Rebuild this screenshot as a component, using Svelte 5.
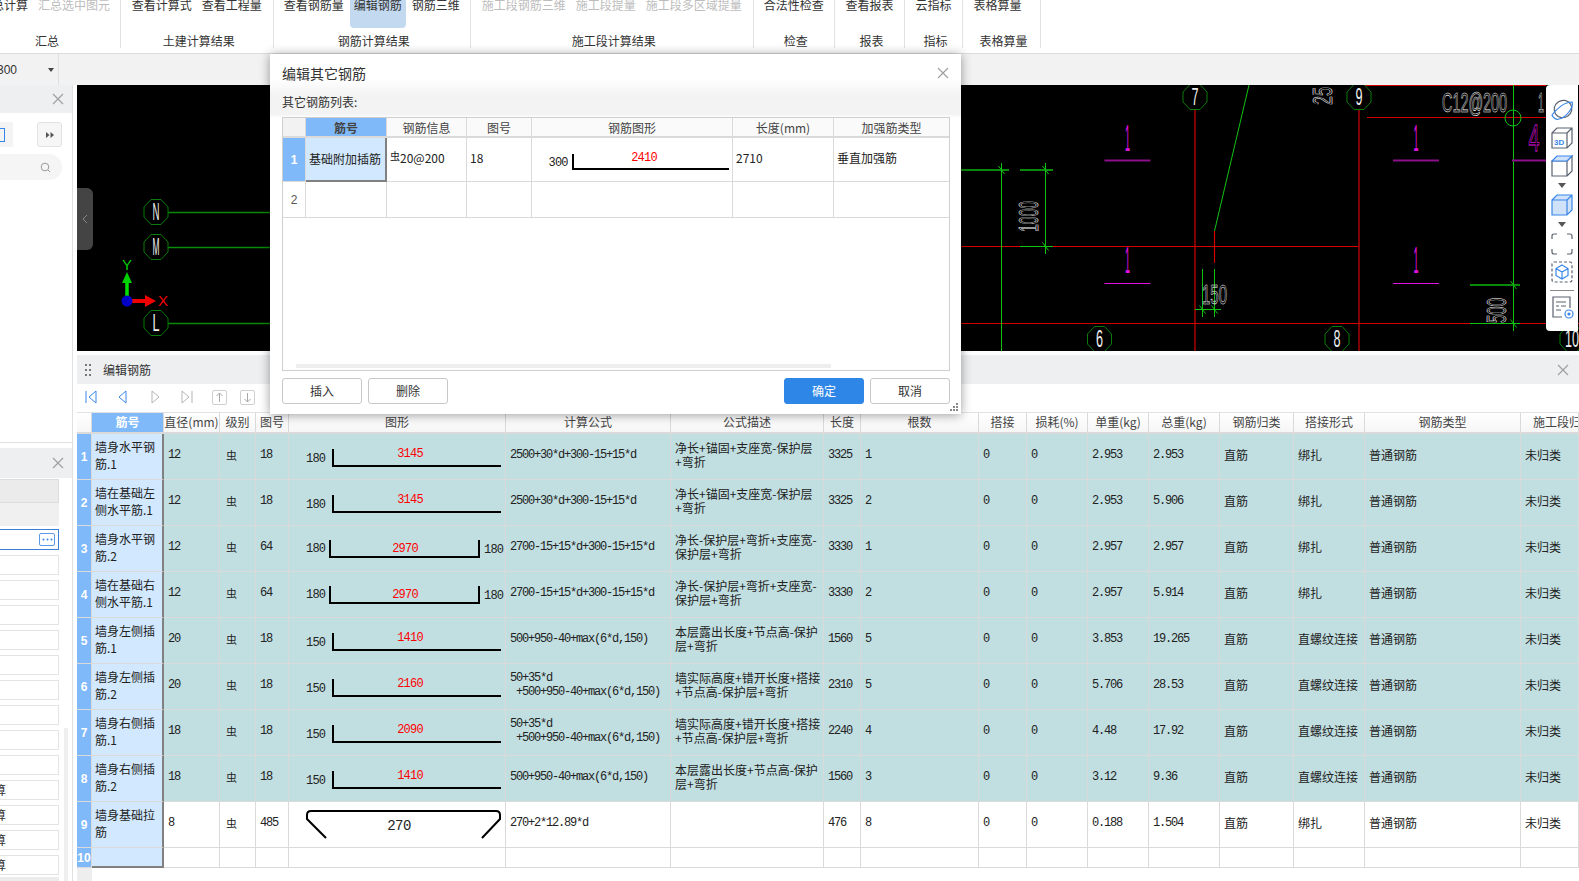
<script>
  const groups = [
    { w: 121, pad: 30, label: "汇总", items: [["汇总计算"], ["汇总选中图元", "off"]] },
    { w: 152.5, label: "土建计算结果", items: [["查看计算式"], ["查看工程量"]] },
    { w: 197.5, label: "钢筋计算结果", items: [["查看钢筋量"], ["编辑钢筋", "on"], ["钢筋三维"]] },
    { w: 282.5, label: "施工段计算结果", items: [["施工段钢筋三维", "off"], ["施工段提量", "off"], ["施工段多区域提量", "off"]] },
    { w: 81.5, label: "检查", items: [["合法性检查"]] },
    { w: 70, label: "报表", items: [["查看报表"]] },
    { w: 58, label: "指标", items: [["云指标"]] },
    { w: 78, pad: 0, label: "表格算量", items: [["表格算量", "shift"]] },
  ];

  const widths = [15, 72, 56, 36, 33, 217, 165, 153, 37, 118, 48, 61, 61, 71, 74, 71, 156, 58];
  const heads = ["", "筋号", "直径(mm)", "级别", "图号", "图形", "计算公式", "公式描述", "长度", "根数", "搭接", "损耗(%)", "单重(kg)", "总重(kg)", "钢筋归类", "搭接形式", "钢筋类型", "施工段归类"];

  const f1 = ["2500+30*d+300-15+15*d"];
  const f2 = ["2700-15+15*d+300-15+15*d"];
  const f3 = ["500+950-40+max(6*d,150)"];
  const f4 = ["50+35*d", " +500+950-40+max(6*d,150)"];
  const d1 = ["净长+锚固+支座宽-保护层", "+弯折"];
  const d2 = ["净长-保护层+弯折+支座宽-", "保护层+弯折"];
  const d3 = ["本层露出长度+节点高-保护", "层+弯折"];
  const d4 = ["墙实际高度+错开长度+搭接", "+节点高-保护层+弯折"];

  const rows = [
    { name: "墙身水平钢筋.1", dia: 12, fig: 18, left: 180, mid: 3145, f: f1, d: d1, len: 3325, n: 1, unit: "2.953", total: "2.953", form: "绑扎" },
    { name: "墙在基础左侧水平筋.1", dia: 12, fig: 18, left: 180, mid: 3145, f: f1, d: d1, len: 3325, n: 2, unit: "2.953", total: "5.906", form: "绑扎" },
    { name: "墙身水平钢筋.2", dia: 12, fig: 64, left: 180, mid: 2970, f: f2, d: d2, len: 3330, n: 1, unit: "2.957", total: "2.957", form: "绑扎" },
    { name: "墙在基础右侧水平筋.1", dia: 12, fig: 64, left: 180, mid: 2970, f: f2, d: d2, len: 3330, n: 2, unit: "2.957", total: "5.914", form: "绑扎" },
    { name: "墙身左侧插筋.1", dia: 20, fig: 18, left: 150, mid: 1410, f: f3, d: d3, len: 1560, n: 5, unit: "3.853", total: "19.265", form: "直螺纹连接" },
    { name: "墙身左侧插筋.2", dia: 20, fig: 18, left: 150, mid: 2160, f: f4, d: d4, len: 2310, n: 5, unit: "5.706", total: "28.53", form: "直螺纹连接" },
    { name: "墙身右侧插筋.1", dia: 18, fig: 18, left: 150, mid: 2090, f: f4, d: d4, len: 2240, n: 4, unit: "4.48", total: "17.92", form: "直螺纹连接" },
    { name: "墙身右侧插筋.2", dia: 18, fig: 18, left: 150, mid: 1410, f: f3, d: d3, len: 1560, n: 3, unit: "3.12", total: "9.36", form: "直螺纹连接" },
    { name: "墙身基础拉筋", dia: 8, fig: 485, mid: 270, f: ["270+2*12.89*d"], d: [], len: 476, n: 8, unit: "0.188", total: "1.504", form: "绑扎", plain: true },
  ];

  const dlgWidths = [23, 81, 80, 65, 201, 101, 115];
  const dlgHeads = ["", "筋号", "钢筋信息", "图号", "钢筋图形", "长度(mm)", "加强筋类型"];

  const bubbles = [
    ["N", 156, 212], ["M", 156, 247], ["L", 156, 323],
    ["7", 1195, 97], ["9", 1359, 97], ["6", 1099.5, 339], ["8", 1337, 339], ["10", 1572, 339],
  ];
  const reds = [
    [1359, 85.5, 1546, 85.5], [1367, 117.5, 1546, 117.5], [961, 246.5, 1359, 246.5], [961, 323.5, 1579, 323.5],
    [1195, 109, 1195, 351], [1359, 109, 1359, 351], [1214.5, 231, 1214.5, 263], [1575, 330, 1575, 351],
  ];
  const greens = [
    [1249, 85, 1214.5, 231], [1001.5, 163, 1001.5, 351], [1045.5, 163, 1045.5, 254], [1513.5, 85, 1513.5, 331],
    [1202.5, 269, 1202.5, 317], [1214.5, 269, 1214.5, 317], [1195, 309.5, 1221, 309.5],
    [1470, 323.5, 1520, 323.5], [1020, 246.5, 1053, 246.5],
  ];
  const thick = [[961, 170, 1009, 170], [1020, 170, 1053, 170], [1470, 285, 1520, 285]];
  const ticks = [[1001.5, 170], [1045.5, 170], [1045.5, 246.5], [1202.5, 309.5], [1214.5, 309.5], [1513.5, 285], [1513.5, 323.5]];
  const marks = [
    ["1", 1127.5, 151, 160.5, 2, "#8c0f8c"], ["1", 1416, 151, 160.5, 2, "#8c0f8c"],
    ["1", 1127.5, 273, 283.5, 1, "#e010e0"], ["1", 1416, 273, 283.5, 1, "#e010e0"],
  ];
  const boxes = ["", "", "", "", "", "", "", "", "", "算", "算", "算", "算"];

  function octagon(x, y) {
    const a = 5, b = 12;
    return [[-a, -b - 0.5], [a, -b - 0.5], [b, -a], [b, a], [a, b + 0.5], [-a, b + 0.5], [-b, a], [-b, -a]]
      .map(([p, q]) => `${x + p},${y + q}`).join(" ");
  }
</script>

{#snippet shape(r)}
  <svg class="bar" width="216" height="45" viewBox="0 0 216 45">
    {#if r.fig === 18}
      <path d="M44 15V32H212" />
      <text class="dim" x="17" y="28">{r.left}</text>
      <text class="dim red" x="121" y="23" text-anchor="middle">{r.mid}</text>
    {:else if r.fig === 64}
      <path d="M41 14V31H190V14" />
      <text class="dim" x="17" y="26">{r.left}</text>
      <text class="dim" x="195" y="27">{r.left}</text>
      <text class="dim red" x="116" y="26" text-anchor="middle">{r.mid}</text>
    {:else}
      <path d="M37 36L18 17V13Q18 9 22 9H207Q211 9 211 13V17L193 36" />
      <text class="dim big" x="110" y="28" text-anchor="middle">{r.mid}</text>
    {/if}
  </svg>
{/snippet}

{#snippet x(cls = "")}
  <svg class="close {cls}" width="12" height="12" viewBox="0 0 12 12"><path d="M1 1L11 11M11 1L1 11" /></svg>
{/snippet}

<div class="app">
  <header class="ribbon">
    {#each groups as g}
      <div class="group" style:width="{g.w}px" style:padding-right="{g.pad ?? 0}px">
        <div class="items">
          {#each g.items as [text, state]}
            <span class="item {state ?? ''}">{text}</span>
          {/each}
        </div>
        <div class="group-label">{g.label}</div>
      </div>
    {/each}
  </header>

  <div class="subbar">
    <div class="combo"><span>300</span><i></i></div>
  </div>

  <div class="body">
    <aside class="side">
      <section class="side-top">
        <div class="side-head">{@render x()}</div>
        <div class="side-tools">
          <span class="chip"><b></b></span>
          <button class="expand" aria-label="展开"><svg width="10" height="8" viewBox="0 0 10 8"><path d="M1 1L4.5 4L1 7ZM5.5 1L9 4L5.5 7Z" /></svg></button>
        </div>
        <div class="search">
          <svg width="11" height="11" viewBox="0 0 11 11"><circle cx="5" cy="5" r="3.8" /><path d="M8 8L10 10" /></svg>
        </div>
      </section>

      <section class="side-bottom">
        <div class="side-head short">{@render x()}</div>
        <div class="side-wrap">
          <div class="side-list">
            <div class="prop head"></div>
            <div class="prop fill"></div>
            <div class="prop active">
              <span class="more"><svg width="11" height="3" viewBox="0 0 11 3"><circle cx="1.5" cy="1.5" r="1" /><circle cx="5.5" cy="1.5" r="1" /><circle cx="9.5" cy="1.5" r="1" /></svg></span>
            </div>
            {#each boxes as b}
              <div class="prop box"><span>{b}</span></div>
            {/each}
            <div class="prop last"></div>
          </div>
          <div class="side-scroll"></div>
        </div>
      </section>
    </aside>

    <main class="main">
      <div class="canvas">
        <svg class="cad" width="1502" height="266" viewBox="77 85 1502 266">
          <rect x="77" y="85" width="1502" height="266" fill="#000" />
          {#each [212, 247, 323] as y}
            <line x1="168" x2="272" y1={y + 0.5} y2={y + 0.5} stroke="#0a8a0a" stroke-width="1.4" />
          {/each}
          {#each reds as [a, b, c, d]}
            <line x1={a} y1={b} x2={c} y2={d} stroke="#d40000" stroke-width="1.2" />
          {/each}
          {#each greens as [a, b, c, d]}
            <line x1={a} y1={b} x2={c} y2={d} stroke="#12c212" stroke-width="1" />
          {/each}
          {#each thick as [a, b, c, d]}
            <line x1={a} y1={b} x2={c} y2={d} stroke="#0a8a0a" stroke-width="2" />
          {/each}
          {#each ticks as [a, b]}
            <path d="M{a - 3} {b - 4}L{a + 3} {b + 4}" stroke="#12c212" fill="none" />
          {/each}
          <circle cx="1513" cy="118" r="8" fill="none" stroke="#12c212" />

          {#each bubbles as [t, bx, by]}
            <polygon points={octagon(bx, by)} fill="#000" stroke="#0a7a0a" />
            <text class="cad-t" x={bx} y={by + 8} text-anchor="middle" textLength={t.length * 7} lengthAdjust="spacingAndGlyphs">{t}</text>
          {/each}

          {#each marks as [t, mx, base, barY, sw, col]}
            <text x={mx} y={base} text-anchor="middle" class="mag" textLength="5" lengthAdjust="spacingAndGlyphs">{t}</text>
            <line x1={mx - 23} x2={mx + 23} y1={barY} y2={barY} stroke={col} stroke-width={sw} />
          {/each}
          <text x="1534" y="151" text-anchor="middle" class="mag thin" textLength="11" lengthAdjust="spacingAndGlyphs">4</text>
          <line x1="1512" x2="1546" y1="160.5" y2="160.5" stroke="#8c0f8c" stroke-width="2" />

          <text class="out" x="1442" y="112" textLength="65" lengthAdjust="spacingAndGlyphs">C12@200</text>
          <text class="out" x="1538" y="112" textLength="6" lengthAdjust="spacingAndGlyphs">1</text>
          <text class="out" x="1202" y="304" textLength="25" lengthAdjust="spacingAndGlyphs">150</text>
          <text class="out" transform="translate(1038 232) rotate(-90)" textLength="31" lengthAdjust="spacingAndGlyphs">1000</text>
          <text class="out" transform="translate(1506 323) rotate(-90)" textLength="25" lengthAdjust="spacingAndGlyphs">500</text>
          <text class="out" transform="translate(1332 105) rotate(-90)" textLength="18" lengthAdjust="spacingAndGlyphs">25</text>

          <path d="M127 301V280" stroke="#00e000" stroke-width="3.5" />
          <path d="M122 283L127 272L132 283Z" fill="#00d000" />
          <path d="M127 301H147" stroke="#f00000" stroke-width="4" />
          <path d="M145 295L156 301L145 307Z" fill="#f00000" />
          <circle cx="127" cy="301" r="5.5" fill="#0000c8" />
          <text x="127" y="270" text-anchor="middle" class="axis green">Y</text>
          <text x="163" y="306" text-anchor="middle" class="axis redx">X</text>
        </svg>

        <div class="handle"><svg width="6" height="10" viewBox="0 0 6 10"><path d="M5 1L1 5L5 9" /></svg></div>

        <nav class="palette">
          <svg width="24" height="24" viewBox="0 0 24 24"><ellipse cx="13" cy="11" rx="9" ry="8.5" transform="rotate(-35 13 11)" class="g" /><path class="b" d="M2 17C7 10 15 4 22 4C24 9 16 20 9 21C6 22 3 20 2 17Z" /></svg>
          <svg width="24" height="24" viewBox="0 0 24 24"><path class="g" d="M2 7L7 2H22V17L17 22H2ZM2 7H17V22M17 7L22 2" /><text x="4" y="19" class="tag">3D</text></svg>
          <svg width="24" height="24" viewBox="0 0 24 24"><path class="g" d="M2 7H17V22H2ZM17 7L22 2V17L17 22" /><path class="b tint" d="M2 7L7 2H22L17 7Z" /></svg>
          <svg width="8" height="7" viewBox="0 0 8 7"><path d="M0 1H8L4 6Z" fill="#555" /></svg>
          <svg width="24" height="24" viewBox="0 0 24 24"><path class="b tint" d="M2 7L7 2H22V17L17 22H2ZM2 7H17V22M17 7L22 2" /></svg>
          <svg width="8" height="7" viewBox="0 0 8 7"><path d="M0 1H8L4 6Z" fill="#555" /></svg>
          <svg width="24" height="24" viewBox="0 0 24 24"><path class="g" d="M2 7V4Q2 2 4 2H7M17 2H20Q22 2 22 4V7M22 17V20Q22 22 20 22H17M7 22H4Q2 22 2 20V17" /></svg>
          <svg width="24" height="24" viewBox="0 0 24 24"><rect class="g dash" x="2" y="2" width="20" height="20" rx="2" /><path class="b" d="M12 5L18 8.5V15.5L12 19L6 15.5V8.5ZM6 8.5L12 12L18 8.5M12 12V19" /></svg>
          <hr />
          <svg width="24" height="24" viewBox="0 0 24 24"><path class="g" d="M20 13V2H3V22H12M6 7H16M6 11H9M11 11H16M6 15H11" /><circle class="b" cx="19" cy="19" r="4" /><circle cx="19" cy="19" r="1.6" fill="#3a86e8" /></svg>
        </nav>
      </div>

      <section class="panel">
        <div class="panel-head">
          <span class="dots"></span>
          <span class="panel-title">编辑钢筋</span>
          {@render x("right")}
        </div>
        <div class="panel-tools">
          <svg width="14" height="16" viewBox="0 0 14 16"><path class="nav" d="M2 2V14M12 2L5 8L12 14Z" /></svg>
          <svg width="14" height="16" viewBox="0 0 14 16"><path class="nav" d="M10 2L3 8L10 14Z" /></svg>
          <svg width="14" height="16" viewBox="0 0 14 16"><path class="nav dim-nav" d="M4 2L11 8L4 14Z" /></svg>
          <svg width="14" height="16" viewBox="0 0 14 16"><path class="nav dim-nav" d="M2 2L9 8L2 14ZM12 2V14" /></svg>
          <span class="boxed"><svg width="15" height="15" viewBox="0 0 15 15"><path d="M7.5 12V3M4.5 6L7.5 3L10.5 6" /></svg></span>
          <span class="boxed down"><svg width="15" height="15" viewBox="0 0 15 15"><path d="M7.5 3V12M4.5 9L7.5 12L10.5 9" /></svg></span>
          <span class="tool-text">弯钩</span>
        </div>

        <table class="sheet">
          <colgroup>
            {#each widths as w}<col style:width="{w}px" />{/each}
          </colgroup>
          <thead>
            <tr>
              {#each heads as h, i}
                <th class:sel={i === 1}>{h}</th>
              {/each}
            </tr>
          </thead>
          <tbody>
            {#each rows as r, i}
              <tr class:teal={!r.plain}>
                <td class="no">{i + 1}</td>
                <td class="name">{r.name}</td>
                <td class="num">{r.dia}</td>
                <td class="grade">虫</td>
                <td class="num">{r.fig}</td>
                <td class="figure">{@render shape(r)}</td>
                <td class="num lines">{#each r.f as l}<div>{l}</div>{/each}</td>
                <td class="lines cjk">{#each r.d as l}<div>{l}</div>{/each}</td>
                <td class="num">{r.len}</td>
                <td class="num">{r.n}</td>
                <td class="num">0</td>
                <td class="num">0</td>
                <td class="num">{r.unit}</td>
                <td class="num">{r.total}</td>
                <td>直筋</td>
                <td>{r.form}</td>
                <td>普通钢筋</td>
                <td>未归类</td>
              </tr>
            {/each}
            <tr class="tail">
              <td class="no">10</td>
              <td class="name"></td>
              {#each widths.slice(2) as _}<td></td>{/each}
            </tr>
          </tbody>
        </table>
        <div class="foot"></div>
      </section>
    </main>
  </div>

  <div class="dialog">
    <div class="dlg-title"><span>编辑其它钢筋</span>{@render x("dlg-x")}</div>
    <div class="dlg-sub">其它钢筋列表:</div>
    <div class="dlg-box">
      <table class="dlg-table">
        <colgroup>
          {#each dlgWidths as w}<col style:width="{w}px" />{/each}
        </colgroup>
        <thead>
          <tr>{#each dlgHeads as h, i}<th class:sel={i === 1}>{h}</th>{/each}</tr>
        </thead>
        <tbody>
          <tr class="first">
            <td class="no">1</td>
            <td class="name cur">基础附加插筋</td>
            <td><sup>虫</sup>20@200</td>
            <td>18</td>
            <td class="figure">
              <svg class="bar" width="200" height="43" viewBox="0 0 200 43">
                <path d="M41 16V31H197" />
                <text class="dim" x="16.5" y="28">300</text>
                <text class="dim red" x="112" y="23" text-anchor="middle">2410</text>
              </svg>
            </td>
            <td>2710</td>
            <td>垂直加强筋</td>
          </tr>
          <tr class="second">
            <td class="idx">2</td>
            {#each dlgWidths.slice(1) as _}<td></td>{/each}
          </tr>
        </tbody>
      </table>
      <div class="dlg-scroll"></div>
    </div>
    <div class="dlg-actions">
      <button>插入</button>
      <button>删除</button>
      <span class="spacer"></span>
      <button class="primary">确定</button>
      <button>取消</button>
    </div>
    <svg class="grip" width="8" height="8" viewBox="0 0 8 8"><path d="M6 0h2v2H6zM3 3h2v2H3zM6 3h2v2H6zM0 6h2v2H0zM3 6h2v2H3zM6 6h2v2H6z" fill="#888" /></svg>
  </div>
</div>

<style>
  :global(body) {
    margin: 0;
    background: #fff;
  }

  .app {
    position: relative;
    width: 1579px;
    height: 881px;
    overflow: hidden;
    display: flex;
    flex-direction: column;
    font: 12px/14px "Noto Sans CJK SC", "Liberation Sans", sans-serif;
    color: #333;
    background: #fff;
  }

  /* ribbon */
  .ribbon {
    display: flex;
    height: 53px;
    flex: none;
    border-bottom: 1px solid #dcdcdc;
    box-sizing: content-box;
  }

  .group {
    height: 48px;
    box-sizing: border-box;
    border-right: 1px solid #e2e2e2;
    display: flex;
    flex-direction: column;
    align-items: center;
    flex: none;
  }

  .items {
    display: flex;
    gap: 10px;
    height: 28px;
    white-space: nowrap;
    line-height: 10px;
  }

  .item.off {
    color: #bdbdbd;
  }

  .item.on {
    background: #c3d9ef;
    margin: 0 -4px;
    padding: 0 4px;
    border-radius: 0 0 4px 4px;
  }

  .item.shift {
    margin-right: 8px;
  }

  .group-label {
    margin-top: auto;
    margin-left: 4px;
    white-space: nowrap;
  }

  .subbar {
    height: 31px;
    flex: none;
    background: #f2f2f2;
    display: flex;
  }

  .combo {
    width: 59px;
    border-right: 1px solid #e0e0e0;
    display: flex;
    align-items: center;
    justify-content: space-between;
    font-family: "Liberation Sans", sans-serif;
    padding-right: 4px;
    box-sizing: border-box;
  }

  .combo span {
    margin-left: -3px;
  }

  .combo i {
    border: 3px solid transparent;
    border-top: 4px solid #444;
    margin-top: 3px;
  }

  .body {
    flex: 1;
    display: flex;
    gap: 4px;
    min-height: 0;
  }

  /* left panels */
  .side {
    width: 73px;
    flex: none;
    display: flex;
    flex-direction: column;
    gap: 5px;
    border-right: 1px solid #e0e0e0;
    box-sizing: border-box;
  }

  .side-top {
    height: 358px;
    flex: none;
    border-bottom: 1px solid #e0e0e0;
    box-sizing: border-box;
  }

  .side-head {
    height: 28px;
    background: #eeeff1;
    display: flex;
    justify-content: flex-end;
    align-items: center;
    padding-right: 8px;
  }

  .side-head.short {
    height: 30px;
  }

  .side-tools {
    display: flex;
    justify-content: space-between;
    margin-top: 9px;
    padding-right: 10px;
  }

  .chip {
    width: 13px;
    height: 25px;
    background: #f4f4f4;
    display: flex;
    align-items: center;
  }

  .chip b {
    width: 4px;
    height: 12px;
    border: 1px solid #3a86e8;
    border-left: 0;
  }

  .expand {
    width: 25px;
    height: 25px;
    padding: 0;
    background: #f6f6f6;
    border: 1px solid #e2e2e2;
    border-radius: 3px;
  }

  .expand path {
    fill: #555;
  }

  .search {
    margin-top: 7px;
    width: 62px;
    height: 26px;
    border-radius: 0 13px 13px 0;
    background: #f5f5f5;
    display: flex;
    align-items: center;
    justify-content: flex-end;
    padding-right: 11px;
    box-sizing: border-box;
  }

  .search svg {
    fill: none;
    stroke: #999;
  }

  .side-wrap {
    display: flex;
    gap: 5px;
    margin-top: 1px;
  }

  .side-list {
    width: 59px;
    display: flex;
    flex-direction: column;
  }

  .prop {
    box-sizing: border-box;
  }

  .prop.head {
    height: 24px;
    background: #ebebeb;
    border: 1px solid #dcdcdc;
    border-left: 0;
  }

  .prop.fill {
    height: 23px;
    background: #f0f0f0;
  }

  .prop.active {
    height: 21px;
    margin-top: 3px;
    border: 1px solid #3a7fd8;
    border-left: 0;
    display: flex;
    align-items: center;
    justify-content: flex-end;
    padding-right: 3px;
  }

  .more {
    width: 16px;
    height: 13px;
    border: 1px solid #5a9ae8;
    border-radius: 2px;
    display: flex;
    align-items: center;
    justify-content: center;
    box-sizing: border-box;
  }

  .more svg {
    flex: none;
    fill: #3a86e8;
  }

  .prop.box {
    height: 20px;
    margin-top: 5px;
    border: 1px solid #e4e4e4;
    border-left: 0;
    line-height: 18px;
    overflow: hidden;
  }

  .prop.box span {
    margin-left: -6px;
    display: block;
  }

  .prop.last {
    height: 26px;
    margin-top: 2px;
    background: #ececec;
  }

  .side-scroll {
    width: 4px;
    height: 160px;
    margin-top: 249px;
    background: #efefef;
  }

  .close {
    flex: none;
    fill: none;
    stroke: #a0a0a0;
    stroke-width: 1.2;
  }

  .close.right {
    margin-left: auto;
    margin-right: 10px;
  }

  /* main */
  .main {
    flex: 1;
    min-width: 0;
    display: flex;
    flex-direction: column;
  }

  .canvas {
    position: relative;
    height: 266px;
    flex: none;
  }

  .cad {
    display: block;
  }

  .cad-t {
    fill: #eee;
    font: 24px "Liberation Sans", sans-serif;
  }

  .mag {
    fill: #e010e0;
    font: 36px "Liberation Sans", sans-serif;
  }

  .mag.thin {
    fill: none;
    stroke: #e010e0;
    stroke-width: 0.8;
  }

  .out {
    fill: none;
    stroke: #fff;
    stroke-width: 0.6;
    font: 27px "Liberation Sans", sans-serif;
  }

  .axis {
    font: 15px "Liberation Sans", sans-serif;
  }

  .axis.green {
    fill: #00d000;
  }

  .axis.redx {
    fill: #f00000;
  }

  .handle {
    position: absolute;
    left: 0;
    top: 103px;
    width: 16px;
    height: 62px;
    background: #444;
    border-radius: 0 6px 6px 0;
    display: flex;
    align-items: center;
    justify-content: center;
  }

  .handle svg {
    fill: none;
    stroke: #888;
  }

  .palette {
    position: absolute;
    right: 1px;
    top: 0;
    width: 32px;
    height: 246px;
    background: #fff;
    border-radius: 4px 0 0 4px;
    display: flex;
    flex-direction: column;
    align-items: center;
    gap: 4px;
    padding-top: 13px;
    box-sizing: border-box;
  }

  .palette hr {
    width: 24px;
    margin: 2px 0 0;
    border: 0;
    border-top: 1px solid #888;
  }

  .palette .g {
    fill: none;
    stroke: #5a6270;
    stroke-width: 1.2;
  }

  .palette .b {
    fill: none;
    stroke: #3a86e8;
    stroke-width: 1.2;
  }

  .palette .tint {
    fill: #cfe2fa;
  }

  .palette .dash {
    stroke-dasharray: 3 2;
  }

  .tag {
    font: 700 8px "Liberation Sans", sans-serif;
    fill: #3a86e8;
  }

  /* bottom panel */
  .panel {
    margin-top: 4px;
    flex: 1;
    min-height: 0;
  }

  .panel-head {
    height: 29px;
    background: #eeeff1;
    display: flex;
    align-items: center;
  }

  .dots {
    width: 2px;
    height: 2px;
    margin: 0 0 0 8px;
    background: #777;
    box-shadow: 0 -5px #777, 0 5px #777, 4px -5px #777, 4px 0 #777, 4px 5px #777;
  }

  .panel-title {
    margin-left: 16px;
  }

  .panel-tools {
    height: 28px;
    padding-bottom: 2px;
    box-sizing: border-box;
    display: flex;
    align-items: center;
    gap: 18px;
    padding-left: 7px;
    white-space: nowrap;
  }

  .nav {
    fill: none;
    stroke: #3a86e8;
    stroke-width: 1;
  }

  .nav.dim-nav {
    stroke: #b5b5b5;
  }

  .boxed {
    width: 15px;
    height: 15px;
    border: 1px solid #cfcfcf;
    border-radius: 2px;
    box-sizing: border-box;
    display: flex;
    align-items: center;
    justify-content: center;
    flex: none;
  }

  .boxed.down {
    margin-left: -5px;
  }

  .boxed svg {
    flex: none;
    fill: none;
    stroke: #a8a8a8;
  }

  .tool-text {
    margin-left: -2px;
  }

  table {
    border-collapse: separate;
    border-spacing: 0;
    table-layout: fixed;
    width: 100%;
  }

  th,
  td {
    box-sizing: border-box;
    padding: 0;
    border-right: 1px solid #dadada;
    border-bottom: 1px solid #dadada;
    font-weight: 400;
    white-space: nowrap;
    overflow: hidden;
  }

  .sheet {
    width: 1502px;
    border-top: 1px solid #e2e2e2;
  }

  .sheet th {
    height: 21px;
    padding-bottom: 1px;
    border-bottom-width: 2px;
    color: #444;
    background: linear-gradient(#fff, #f6f6f6);
  }

  .sheet th:last-child {
    text-align: left;
    padding-left: 12px;
  }

  th.sel {
    background: #80b9f9 !important;
    color: #fff;
    font-weight: 700;
  }

  .sheet td {
    height: 46px;
    padding: 0 3px 4px 4px;
    color: #222;
  }

  .sheet .teal td {
    background: #c1dee0;
  }

  .sheet td.no {
    padding: 0;
    background: #80b9f9;
    color: #fff;
    font-weight: 700;
    text-align: center;
    font-family: "Liberation Sans", sans-serif;
    font-size: 12px;
  }

  .sheet td.name {
    padding: 0 3px 4px;
    background: #d1e8fe;
    white-space: normal;
    line-height: 17px;
    word-break: break-all;
    border-right: 2px solid #808080;
  }

  .sheet td.num {
    font: 12px/14px "Liberation Mono", monospace;
    letter-spacing: -1.2px;
  }

  .sheet td.grade {
    padding-left: 6px;
    font-size: 11px;
  }

  .sheet td.figure {
    padding: 0;
    overflow: visible;
  }

  .lines div {
    white-space: pre;
  }

  .sheet td.cjk {
    line-height: 14px;
  }

  .sheet .tail td {
    height: 20px;
    padding: 0;
  }

  .sheet .tail td.name {
    border-bottom: 2px solid #808080;
  }

  .foot {
    width: 15px;
    height: 14px;
    background: #eee;
  }

  .bar {
    display: block;
  }

  .bar path {
    fill: none;
    stroke: #000;
    stroke-width: 2;
  }

  .dim {
    font: 12px "Liberation Mono", monospace;
    letter-spacing: -0.8px;
    fill: #222;
  }

  .dim.red {
    fill: #f00;
  }

  .dim.big {
    font-size: 14px;
    letter-spacing: -0.6px;
  }

  /* dialog */
  .dialog {
    position: absolute;
    left: 270px;
    top: 54px;
    width: 691px;
    height: 360px;
    padding: 0 11px 0 12px;
    box-sizing: border-box;
    background: linear-gradient(#fff 24px, #f3f3f3 42px, #f3f3f3 60px, #fff 64px);
    box-shadow: 0 1px 10px rgba(0, 0, 0, 0.4);
    display: flex;
    flex-direction: column;
  }

  .dlg-title {
    height: 38px;
    display: flex;
    align-items: center;
    justify-content: space-between;
    font-size: 14px;
    box-sizing: border-box;
  }

  .dlg-x {
    margin-right: 1px;
  }

  .dlg-sub {
    height: 25px;
    line-height: 20px;
  }

  .dlg-box {
    height: 254px;
    border: 1px solid #cfcfcf;
    background: #fff;
    box-sizing: border-box;
    position: relative;
  }

  .dlg-table th {
    height: 20px;
    padding-top: 1px;
    border-bottom-width: 2px;
    color: #444;
    background: #fafafa;
  }

  .dlg-table th:last-child,
  .dlg-table td:last-child {
    border-right: 0;
  }

  .dlg-table th:first-child {
    background: #f2f2f2;
  }

  .dlg-table .first td {
    height: 44px;
  }

  .dlg-table .second td {
    height: 36px;
  }

  .dlg-table td {
    padding: 0 3px 4px 3px;
    color: #222;
  }

  .dlg-table sup {
    font-size: 10px;
    line-height: 0;
    vertical-align: 3px;
  }

  .dlg-table td.no {
    padding: 0;
    background: #80b9f9;
    color: #fff;
    font-weight: 700;
    text-align: center;
    font-family: "Liberation Sans", sans-serif;
  }

  .dlg-table td.idx {
    padding: 0;
    text-align: center;
    color: #555;
    font-family: "Liberation Sans", sans-serif;
  }

  .dlg-table td.name {
    background: #d1e8fe;
    border-right: 2px solid #808080;
    border-bottom: 2px solid #808080;
    padding-bottom: 0;
  }

  .dlg-table td.figure {
    padding: 0;
  }

  .dlg-scroll {
    position: absolute;
    left: 13px;
    top: 246px;
    width: 535px;
    height: 4px;
    background: #eee;
  }

  .dlg-actions {
    display: flex;
    gap: 6px;
    margin-top: 7px;
  }

  .spacer {
    flex: 1;
  }

  .dlg-actions button {
    width: 80px;
    height: 26px;
    padding: 0;
    font: inherit;
    color: #333;
    background: #fff;
    border: 1px solid #c8c8c8;
    border-radius: 3px;
  }

  .dlg-actions .primary {
    background: #2e86e6;
    border-color: #2e86e6;
    color: #fff;
  }

  .grip {
    position: absolute;
    right: 3px;
    bottom: 3px;
  }
</style>
